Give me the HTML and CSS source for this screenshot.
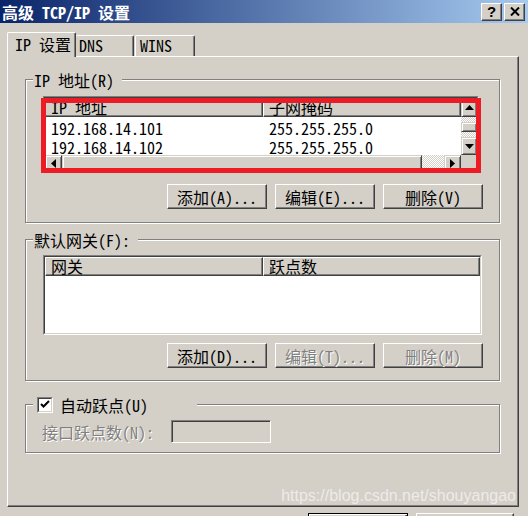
FILE: index.html
```html
<!DOCTYPE html>
<html lang="zh-CN">
<head>
<meta charset="utf-8">
<title>高级 TCP/IP 设置</title>
<link rel="stylesheet" href="styles.css">
</head>
<body>
<div class="titlebar">
  <span class="title">高级 TCP/IP 设置</span>
  <div class="tbtns">
    <div class="tbtn"><span class="qmark">?</span></div>
    <div class="tbtn"><svg width="10" height="9" viewBox="0 0 10 9"><path d="M1 0.5 L9 8.5 M9 0.5 L1 8.5" stroke="#000" stroke-width="2" fill="none"/></svg></div>
  </div>
</div>
<div class="main">
  <div class="tabs">
    <div class="tab active">IP 设置</div>
    <div class="tab dns">DNS</div>
    <div class="tab wins">WINS</div>
  </div>
  <div class="panel">
    <div class="group g1">
      <div class="glabel">IP 地址(R)</div>
      <div class="list list1">
        <div class="list-in grid1">
          <div class="lhead">
            <div class="hcell c1">IP 地址</div>
            <div class="hcell c2">子网掩码</div>
          </div>
          <div class="vscroll">
            <div class="sbtn up"><svg width="9" height="5" viewBox="0 0 9 5"><path d="M4.5 0 L9 5 L0 5 Z" fill="#000"/></svg></div>
            <div class="vtrack"><div class="vthumb"></div></div>
            <div class="sbtn down"><svg width="9" height="5" viewBox="0 0 9 5"><path d="M0 0 L9 0 L4.5 5 Z" fill="#000"/></svg></div>
          </div>
          <div class="lbody">
            <div class="row"><span class="c1">192.168.14.101</span><span class="c2">255.255.255.0</span></div>
            <div class="row"><span class="c1">192.168.14.102</span><span class="c2">255.255.255.0</span></div>
          </div>
          <div class="hscroll">
            <div class="sbtn hb"><svg width="5" height="9" viewBox="0 0 5 9"><path d="M5 0 L5 9 L0 4.5 Z" fill="#000"/></svg></div>
            <div class="hthumb"></div>
            <div class="htrack"></div>
            <div class="sbtn hb"><svg width="5" height="9" viewBox="0 0 5 9"><path d="M0 0 L5 4.5 L0 9 Z" fill="#000"/></svg></div>
          </div>
          <div class="corner"></div>
        </div>
      </div>
      <div class="btnrow">
        <div class="btn">添加(A)...</div>
        <div class="btn">编辑(E)...</div>
        <div class="btn">删除(V)</div>
      </div>
      <div class="highlight"></div>
    </div>

    <div class="group g2">
      <div class="glabel">默认网关(F):</div>
      <div class="list list2">
        <div class="list-in grid2">
          <div class="lhead">
            <div class="hcell c1">网关</div>
            <div class="hcell c2">跃点数</div>
          </div>
          <div class="body2"></div>
        </div>
      </div>
      <div class="btnrow">
        <div class="btn">添加(D)...</div>
        <div class="btn dis">编辑(T)...</div>
        <div class="btn dis">删除(M)</div>
      </div>
    </div>

    <div class="group g3">
      <div class="chklabel">
        <div class="checkbox"><div class="checkbox-in"><svg width="10" height="9" viewBox="0 0 10 9"><path d="M1 4 L3.5 6.5 L9 1" stroke="#000" stroke-width="2" fill="none"/></svg></div></div>
        <span>自动跃点(U)</span>
      </div>
      <div class="hoprow">
        <span class="dislabel">接口跃点数(N):</span>
        <div class="input"></div>
      </div>
    </div>
  </div>
  <div class="bottom">
    <div class="dbtn ok"></div>
    <div class="dbtn cancel"></div>
  </div>
</div>
<div class="watermark">https://blog.csdn.net/shouyangao</div>
</body>
</html>
```

FILE: styles.css
```css
* { box-sizing: border-box; }
html, body { margin: 0; padding: 0; }
body {
  width: 528px;
  height: 516px;
  overflow: hidden;
  position: relative;
  background: #d4d0c8;
  font-family: "Noto Sans Mono CJK SC", "Noto Sans CJK SC", sans-serif;
  font-size: 16px;
  line-height: 16px;
  color: #000;
}
.titlebar {
  height: 23px;
  display: flex;
  align-items: center;
  padding-left: 2px;
  background: linear-gradient(to right, #0a246a, #a6caf0);
}
.title { color: #fff; font-weight: bold; }
.tbtns { margin-left: auto; margin-right: 3px; display: flex; gap: 2px; }
.tbtn {
  width: 21px;
  height: 18px;
  background: #d4d0c8;
  border: 1px solid;
  border-color: #fff #404040 #404040 #fff;
  box-shadow: inset -1px -1px #808080;
  display: flex;
  align-items: center;
  justify-content: center;
}
.qmark { font-family: "Liberation Sans", sans-serif; font-weight: bold; font-size: 15px; line-height: 15px; }

.main { padding: 9px 0 0 7px; }
.tabs { display: flex; align-items: flex-end; height: 24px; position: relative; z-index: 2; }
.tab {
  background: #d4d0c8;
  border-top: 1px solid #fff;
  border-left: 1px solid #fff;
  border-right: 1px solid #404040;
  box-shadow: inset -1px 0 #808080;
  border-radius: 2px 2px 0 0;
  height: 21px;
  line-height: 19px;
}
.tab.active { width: 69px; height: 25px; margin-bottom: -1px; padding-left: 7px; line-height: 22px; }
.tab.dns { width: 58px; border-left: none; padding-left: 3px; }
.tab.wins { width: 60px; margin-left: 1px; padding-left: 4px; }

.panel {
  width: 512px;
  height: 451px;
  border: 1px solid;
  border-color: #fff #404040 #404040 #fff;
  box-shadow: inset -1px -1px #808080;
  padding: 22px 17px 0 17px;
}

.group {
  position: relative;
  width: 475px;
  border: 1px solid #808080;
  box-shadow: inset 1px 1px #fff, 1px 1px #fff;
}
.g1 { padding: 16px 16px 13px 17px; }
.g2 { margin-top: 16px; padding: 15px 16px 12px 17px; }
.g3 { margin-top: 23px; padding: 15px 16px 9px 16px; }
.glabel {
  position: absolute;
  top: -8px;
  left: 7px;
  padding: 0 8px 0 1px;
  background: #d4d0c8;
  line-height: 16px;
}

.list { border: 1px solid; border-color: #808080 #fff #fff #808080; background: #fff; }
.list-in { border: 1px solid; border-color: #404040 #d4d0c8 #d4d0c8 #404040; }
.list1 { width: 436px; }
.list2 { width: 439px; }
.grid1 { display: grid; grid-template-columns: 1fr 16px; grid-template-rows: 19px 38px 16px; }
.grid2 { display: flex; flex-direction: column; height: 78px; }
.lhead { display: flex; grid-column: 1; grid-row: 1; height: 19px; flex: none; }
.hcell {
  background: #d4d0c8;
  border: 1px solid;
  border-color: #fff #404040 #404040 #fff;
  box-shadow: inset -1px -1px #808080;
  height: 19px;
  line-height: 17px;
  padding-left: 5px;
}
.c1 { width: 218px; flex: none; }
.hcell.c2 { flex: 1; }
.lbody { grid-column: 1; grid-row: 2; overflow: hidden; background: #fff; padding-top: 1px; }
.row { display: flex; height: 19px; padding-top: 2px; line-height: 16px; }
.row span { padding-left: 6px; }
.body2 { flex: 1; background: #fff; }

.vscroll, .hscroll, .htrack {
  background: repeating-conic-gradient(#fff 0 25%, #d4d0c8 0 50%) 0 0 / 2px 2px;
}
.vscroll { grid-column: 2; grid-row: 1 / 3; display: flex; flex-direction: column; }
.sbtn {
  background: #d4d0c8;
  border: 1px solid;
  border-color: #d4d0c8 #404040 #404040 #d4d0c8;
  box-shadow: inset 1px 1px #fff, inset -1px -1px #808080;
  display: flex;
  align-items: center;
  justify-content: center;
  flex: none;
}
.sbtn.up { height: 19px; }
.sbtn.down { height: 18px; }
.vtrack { flex: 1; }
.vthumb, .hthumb {
  background: #d4d0c8;
  border: 1px solid;
  border-color: #d4d0c8 #404040 #404040 #d4d0c8;
  box-shadow: inset 1px 1px #fff, inset -1px -1px #808080;
}
.vthumb { margin-top: 5px; height: 10px; }
.hscroll { grid-column: 1; grid-row: 3; display: flex; }
.sbtn.hb { width: 17px; }
.hthumb { width: 360px; flex: none; }
.htrack { flex: 1; }
.corner { grid-column: 2; grid-row: 3; background: #d4d0c8; }

.btnrow { display: flex; justify-content: flex-end; gap: 8px; }
.g1 .btnrow { margin-top: 11px; }
.g2 .btnrow { margin-top: 8px; }
.btn {
  width: 100px;
  height: 25px;
  background: #d4d0c8;
  border: 1px solid;
  border-color: #fff #404040 #404040 #fff;
  box-shadow: inset -1px -1px #808080;
  display: flex;
  align-items: center;
  justify-content: center;
}
.btn.dis { color: #808080; text-shadow: 1px 1px #fff; }

.highlight {
  position: absolute;
  left: 15px;
  top: 18px;
  width: 440px;
  height: 75px;
  border: 5px solid #ed1c24;
}

.chklabel {
  position: absolute;
  top: -9px;
  left: 7px;
  width: 164px;
  height: 17px;
  padding-left: 4px;
  display: flex;
  align-items: center;
  gap: 7px;
  background: #d4d0c8;
}
.checkbox { width: 16px; height: 16px; border: 1px solid; border-color: #808080 #fff #fff #808080; background: #fff; }
.checkbox-in {
  width: 14px;
  height: 14px;
  border: 1px solid;
  border-color: #404040 #d4d0c8 #d4d0c8 #404040;
  display: flex;
  align-items: center;
  justify-content: center;
}
.hoprow { display: flex; align-items: center; }
.dislabel { width: 129px; color: #808080; text-shadow: 1px 1px #fff; }
.input {
  width: 100px;
  height: 23px;
  border: 1px solid;
  border-color: #808080 #fff #fff #808080;
  box-shadow: inset 1px 1px #404040, inset -1px -1px #d4d0c8;
  background: #d4d0c8;
}

.bottom { display: flex; gap: 8px; margin-top: 6px; margin-left: 301px; }
.dbtn { width: 100px; height: 25px; background: #d4d0c8; }
.ok { border: 1px solid #000; box-shadow: inset 1px 1px #fff, inset -1px -1px #404040, inset -2px -2px #808080; }
.cancel { width: 98px; border: 1px solid; border-color: #fff #404040 #404040 #fff; box-shadow: inset -1px -1px #808080; }

.watermark {
  position: absolute;
  right: 12px;
  top: 487px;
  font-family: "Liberation Sans", sans-serif;
  font-size: 16px;
  line-height: 18px;
  color: rgba(255, 255, 255, 0.6);
}
```
